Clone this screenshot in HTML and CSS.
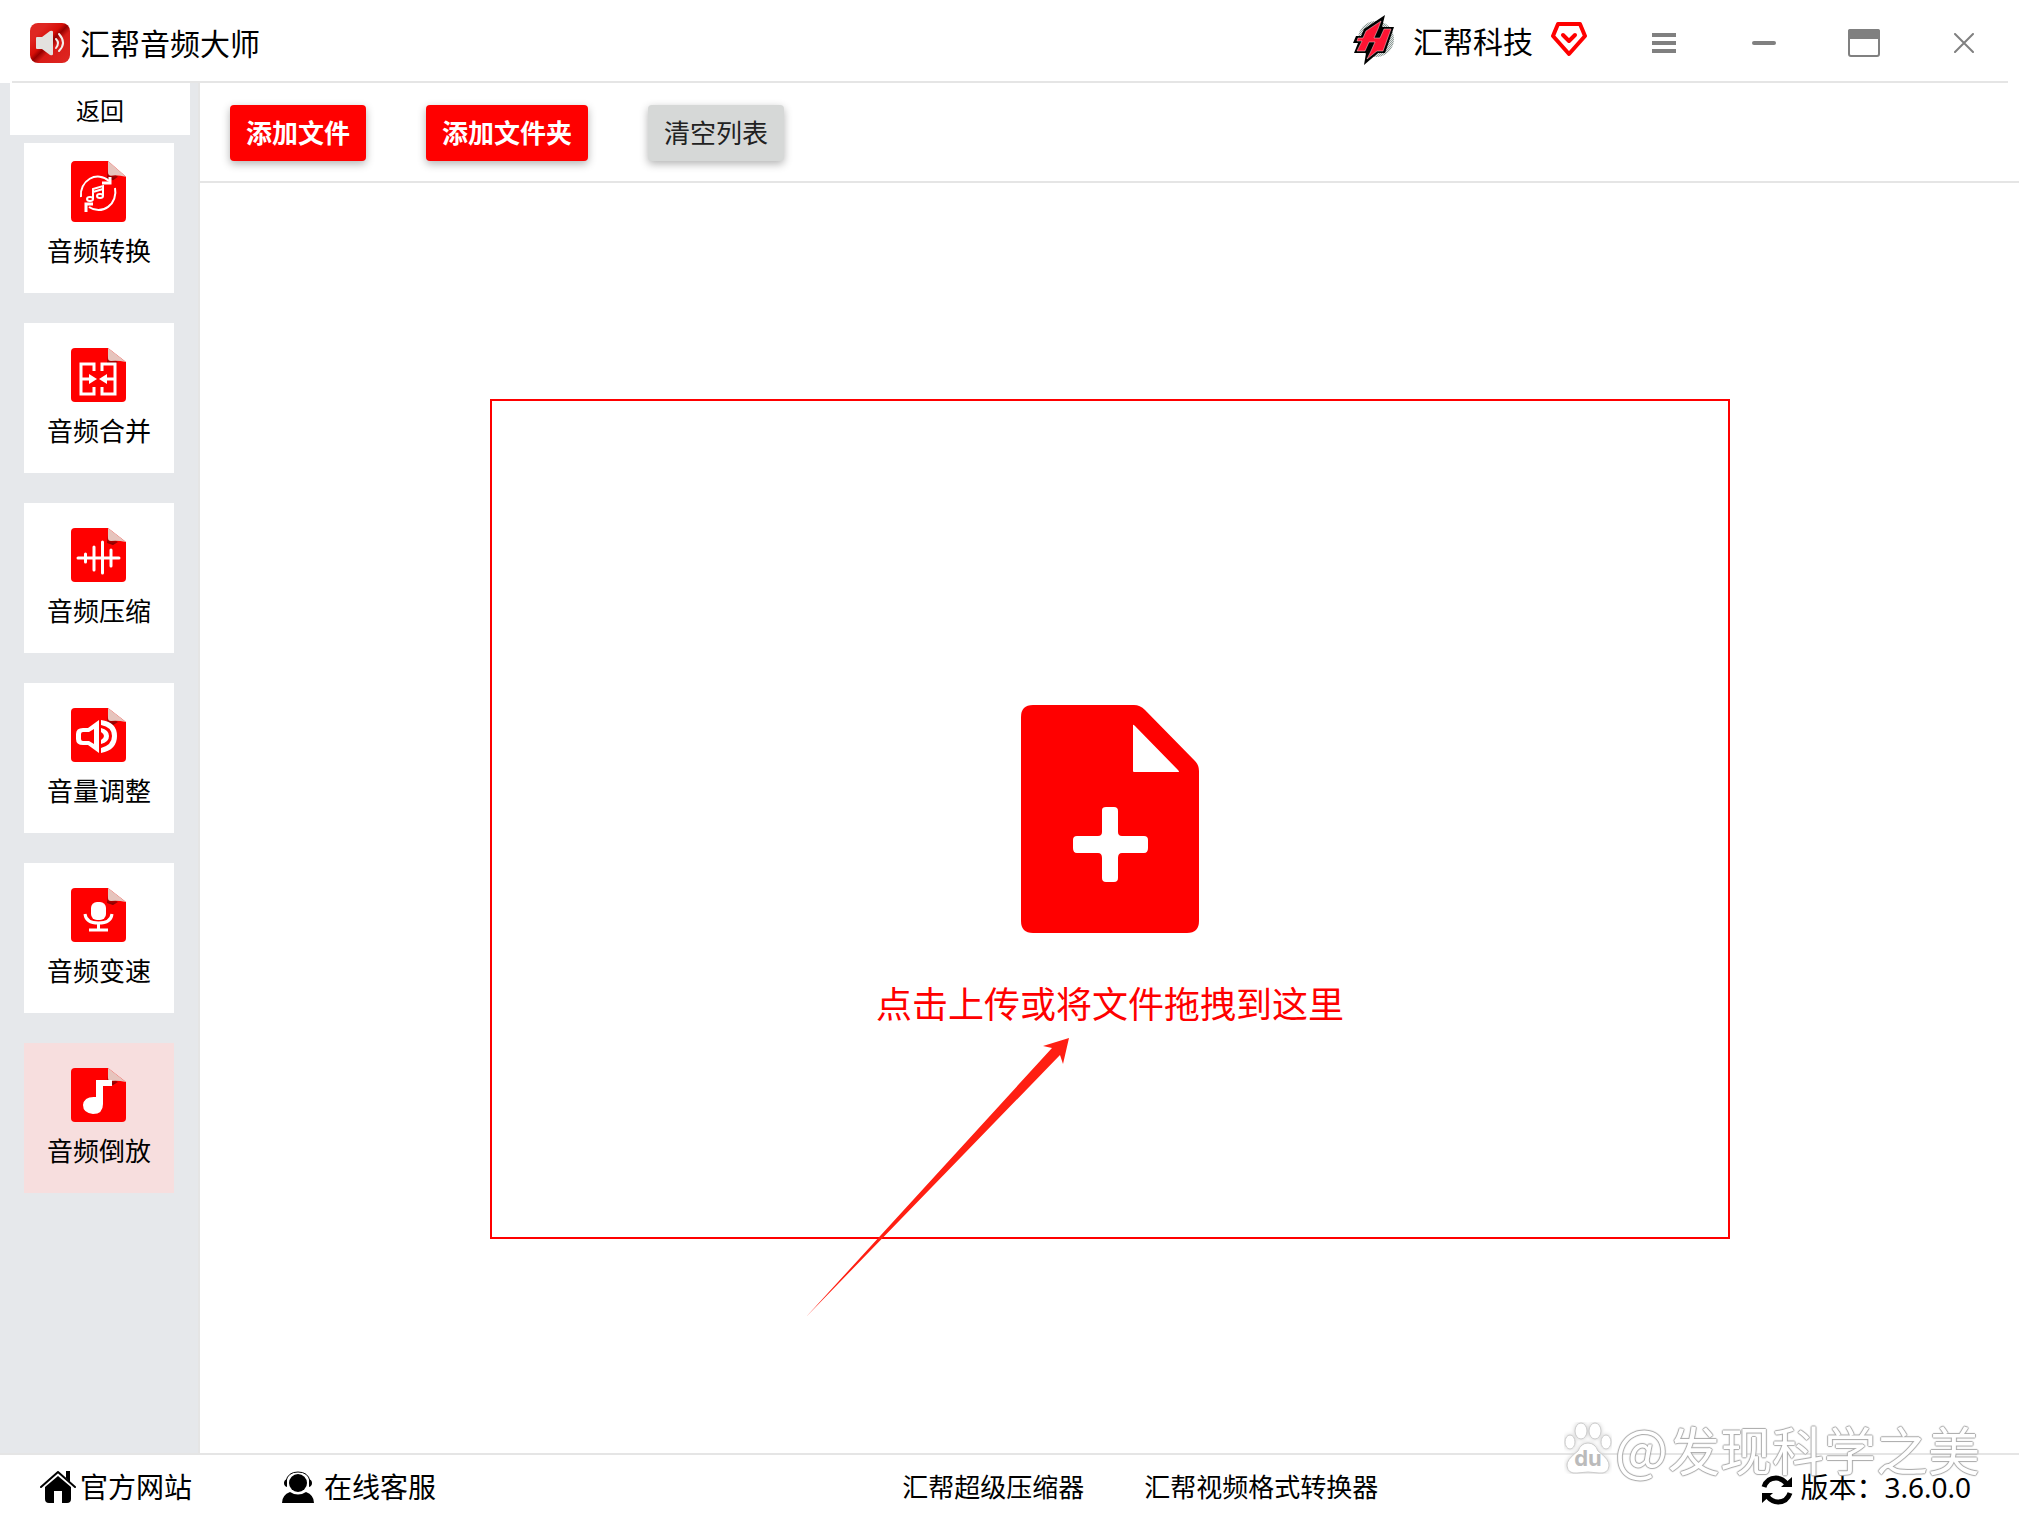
FILE: index.html
```html
<!DOCTYPE html>
<html lang="zh-CN">
<head>
<meta charset="utf-8">
<title>汇帮音频大师</title>
<link rel="stylesheet" href="styles.css">
</head>
<body>
<svg class="defs" width="0" height="0" aria-hidden="true">
  <defs>
    <linearGradient id="logo-fill" x1="0" y1="0" x2="1" y2="1">
      <stop offset="0" stop-color="#df2722"/><stop offset=".22" stop-color="#df2722"/>
      <stop offset=".42" stop-color="#d80f08"/><stop offset=".5" stop-color="#960000"/>
      <stop offset=".6" stop-color="#d81c18"/><stop offset="1" stop-color="#df2722"/>
    </linearGradient>
    <linearGradient id="fold-shade" x1="0" y1="0" x2="0" y2="1">
      <stop offset="0" stop-color="#f00"/><stop offset="1" stop-color="#7a0000"/>
    </linearGradient>
    <pattern id="dots" width="2" height="2" patternUnits="userSpaceOnUse">
      <rect width="2" height="2" fill="#dfe5e3"/><rect width="1" height="1" fill="#8f9a97"/><rect x="1" y="1" width="1" height="1" fill="#8f9a97"/>
    </pattern>
    <symbol id="sheet" viewBox="0 0 55 54" preserveAspectRatio="none">
      <path fill="#f00" d="M4 0h33l18 14v36q0 4-4 4H4q-4 0-4-4V4q0-4 4-4z"/>
      <path fill="url(#fold-shade)" d="M36 7v8l6 2 5-3z"/>
      <path fill="#e6c4bd" d="M37 0l18 14q-9-2-15-1-3 0-3-3z"/>
    </symbol>
  </defs>
</svg>

<header class="titlebar">
  <div class="brand">
    <svg width="40" height="40" viewBox="0 0 40 40" aria-hidden="true">
      <rect width="40" height="40" rx="8" fill="url(#logo-fill)"/>
      <path fill="#e3e1de" d="M6 15q0-1 1-1h5l8-6q3-1 3 1v22q0 2-3 1l-8-6H7q-1 0-1-1z"/>
      <path fill="none" stroke="#f3eeec" stroke-width="2" stroke-linecap="round" d="M26 16q4 4 0 9M29 11q8 9 0 17"/>
    </svg>
    <h1 class="brand-name">汇帮音频大师</h1>
  </div>
  <div class="account">
    <svg width="42" height="50" viewBox="0 0 42 50" aria-hidden="true">
      <circle cx="23" cy="24" r="18" fill="url(#dots)"/>
      <path fill="#000" d="M32 0l-3 12h12l-9 26h-7L11 50l2-12H1l4-10H0l3-7h5l3-7z"/>
      <path fill="#ff1433" stroke="#ffd5da" stroke-width=".5" d="M28 6L13 16l-3 7H5l-1 3h5L4 36h8l4-9h6l-4 9-4 8 10-8h6l8-22h-7l-4 9h-6l4-9z"/>
    </svg>
    <span class="account-name">汇帮科技</span>
    <svg width="36" height="36" viewBox="0 0 36 36" fill="none" stroke="#f00" aria-hidden="true">
      <path stroke-width="4" stroke-linejoin="round" d="M7 2h22l5 12-16 18L2 14z"/>
      <path stroke-width="4" stroke-linecap="round" stroke-linejoin="round" d="M12 13l6 6 6-6"/>
    </svg>
  </div>
  <div class="window-controls">
    <button class="win-btn" type="button" aria-label="菜单"><svg width="24" height="20" viewBox="0 0 24 20" fill="#808080"><path d="M0 0h24v4H0zM0 8h24v4H0zM0 16h24v4H0z"/></svg></button>
    <button class="win-btn" type="button" aria-label="最小化"><svg width="24" height="4" viewBox="0 0 24 4"><rect width="24" height="4" rx="2" fill="#808080"/></svg></button>
    <button class="win-btn" type="button" aria-label="最大化"><svg width="32" height="28" viewBox="0 0 32 28"><rect x="1" y="1" width="30" height="26" rx="2" fill="none" stroke="#808080" stroke-width="2"/><path fill="#808080" d="M0 2q0-2 2-2h28q2 0 2 2v8H0z"/></svg></button>
    <button class="win-btn" type="button" aria-label="关闭"><svg width="20" height="20" viewBox="0 0 20 20"><path fill="none" stroke="#808080" stroke-width="2" stroke-linecap="round" d="M1 1l18 18M19 1L1 19"/></svg></button>
  </div>
</header>

<div class="workspace">
  <nav class="sidebar">
    <button class="back" type="button">返回</button>
    <div class="tools">
      <button class="tool" type="button">
        <svg class="tool-icon" width="55" height="61" viewBox="0 0 55 61">
          <use href="#sheet" width="55" height="61"/>
          <g fill="none" stroke="#fff" stroke-width="2">
            <path d="M10 36A17 18 0 0 1 38 20M44 27A17 18 0 0 1 18 46"/>
            <path stroke-width="3" d="M31 22h8v-6M15 51v-8h7"/>
            <path d="M22 38V28l10-3v10M22 31l10-3"/><ellipse cx="19" cy="38" rx="3" ry="2"/><ellipse cx="29" cy="35" rx="3" ry="2"/>
          </g>
        </svg>
        音频转换
      </button>
      <button class="tool" type="button">
        <svg class="tool-icon" width="55" height="54" viewBox="0 0 55 54">
          <use href="#sheet" width="55" height="54"/>
          <g fill="none" stroke="#fff" stroke-width="3"><path d="M23 23v-7H10v30h13v-7M31 23v-7h13v30H31v-7M10 31h9M44 31H34"/></g>
          <path fill="#fff" d="M18 26l8 5-8 5zM36 26l-8 5 8 5z"/>
        </svg>
        音频合并
      </button>
      <button class="tool" type="button">
        <svg class="tool-icon" width="55" height="54" viewBox="0 0 55 54">
          <use href="#sheet" width="55" height="54"/>
          <path fill="none" stroke="#fff" stroke-width="3" stroke-linecap="round" d="M7 30h41M14.500 26v8M23 19v23M31.500 14v31M40 22v16"/>
        </svg>
        音频压缩
      </button>
      <button class="tool" type="button">
        <svg class="tool-icon" width="55" height="54" viewBox="0 0 55 54">
          <use href="#sheet" width="55" height="54"/>
          <path fill="#fff" fill-rule="evenodd" d="M28 12v33L17 37h-5Q5 37 5 31v-5q0-6 7-6h5zM23 21l-5 3h-6q-2 0-2 2v5q0 2 2 2h6l5 3z"/>
          <path fill="#fff" d="M30 12q16 2 16 16T30 45v-5q11-3 11-12T30 17zM30 20q8 2 8 8t-8 8v-4q3-2 3-4t-3-4z"/>
        </svg>
        音量调整
      </button>
      <button class="tool" type="button">
        <svg class="tool-icon" width="55" height="54" viewBox="0 0 55 54">
          <use href="#sheet" width="55" height="54"/>
          <rect x="20" y="14" width="15" height="18" rx="6" fill="#fff"/>
          <path fill="none" stroke="#fff" stroke-width="3" d="M14 26q1 9 13.500 9T41 26M27.500 35v7M18 42h19"/>
        </svg>
        音频变速
      </button>
      <button class="tool active" type="button" aria-current="page">
        <svg class="tool-icon" width="55" height="54" viewBox="0 0 55 54">
          <use href="#sheet" width="55" height="54"/>
          <path fill="#fff" d="M25 12h16v6h-9v18q0 10-10 10-10-1-10-9 1-9 13-8z"/>
        </svg>
        音频倒放
      </button>
    </div>
  </nav>

  <main class="content">
    <div class="toolbar">
      <button class="action primary" type="button">添加文件</button>
      <button class="action primary" type="button">添加文件夹</button>
      <button class="action" type="button">清空列表</button>
    </div>
    <div class="stage">
      <button class="dropzone" type="button">
        <svg width="178" height="228" viewBox="0 0 178 228" aria-hidden="true">
          <path fill="#f00" fill-rule="evenodd" d="M12 0h101q6 0 11 5l50 51q4 4 4 10v150q0 12-12 12H12q-12 0-12-12V12Q0 0 12 0zM112 20v46q0 1 1 1h44q2 0 0-2l-43-44q-2-2-2-1zM81 105q0-3 4-3h8q4 0 4 4v21q0 4 4 4h22q4 0 4 4v8q0 5-4 5h-22q-4 0-4 5v20q0 4-4 4h-8q-4 0-4-4v-20q0-5-4-5H56q-4 0-4-5v-8q0-4 4-4h21q4 0 4-4z"/>
        </svg>
        <span class="drop-text">点击上传或将文件拖拽到这里</span>
        <svg class="arrow" width="264" height="280" viewBox="0 0 264 280" aria-hidden="true">
          <path fill="#ff1f12" d="M263 0l-26 8 9 2L0 279 254 17l3 9z"/>
        </svg>
      </button>
    </div>
  </main>
</div>

<footer class="statusbar">
  <div class="support">
    <a class="foot-link site" href="#site">
      <svg width="36" height="32" viewBox="0 0 36 32" aria-hidden="true"><path d="M18 5l13 11v12q0 4-4 4h-5V20h-8v12H9q-4 0-4-4V16z"/><path fill="none" stroke="#000" stroke-width="2" stroke-linecap="round" stroke-linejoin="round" d="M1 16L18 1l17 15"/><path d="M26 0h4v11l-4-4z"/></svg>
      官方网站
    </a>
    <a class="foot-link service" href="#service">
      <svg width="32" height="32" viewBox="0 0 32 32" aria-hidden="true"><circle cx="16" cy="12" r="9"/><path fill="none" stroke="#000" d="M4 10q2-9 12-9t12 9"/><path d="M5 8v8q-3-1-3-4t3-4zM27 8v8q3-1 3-4t-3-4zM0 32q0-8 8-11 8 5 16 0 8 3 8 11z"/></svg>
      在线客服
    </a>
  </div>
  <div class="products">
    <a href="#compressor">汇帮超级压缩器</a>
    <a href="#converter">汇帮视频格式转换器</a>
  </div>
  <button class="version" type="button">
    <svg class="refresh" width="32" height="32" viewBox="0 0 32 32" aria-hidden="true"><path fill="none" stroke="#000" stroke-width="5" d="M3 13Q6 4 15 4q6 0 11 6M29 19q-3 9-12 9-6 0-11-6"/><path d="M31 3v10H20zM1 29V19h11z"/></svg>
    <span>版本：3.6.0.0</span>
  </button>
</footer>

<div class="watermark">
  <svg width="48" height="52" viewBox="0 0 48 52" aria-hidden="true">
    <g class="paw" fill="#fff" stroke="#ccc"><ellipse cx="17" cy="9" rx="6" ry="8"/><ellipse cx="31" cy="9" rx="6" ry="8"/><ellipse cx="6" cy="20" rx="5" ry="7"/><ellipse cx="42" cy="20" rx="5" ry="7"/><path d="M24 21q7 0 10 8 12 9 11 15-1 8-10 7-11-2-22 0-9 1-10-7-1-6 11-15 3-8 10-8z"/></g>
    <text class="paw-text" x="24" y="44" text-anchor="middle">du</text>
  </svg>
  <span><span class="at">@</span>发现科学之美</span>
</div>
</body>
</html>
```
FILE: styles.css
```css
* { box-sizing: border-box; }

body {
  margin: 0;
  min-height: 100vh;
  display: flex;
  flex-direction: column;
  position: relative;
  background: #fff;
  color: #000;
  font-family: "Noto Sans", "Noto Sans CJK SC", sans-serif;
  font-size: 26px;
  line-height: 36px;
}

button {
  padding: 0;
  border: 0;
  background: none;
  color: inherit;
  font: inherit;
  cursor: pointer;
}

a { color: inherit; text-decoration: none; }
svg { display: block; flex: none; }
.defs { position: absolute; }

/* Title bar */
.titlebar {
  display: flex;
  align-items: center;
  height: 83px;
  margin: 0 11px 0 12px;
  padding-bottom: 2px;
  border-bottom: 2px solid #e5e5e5;
}

.brand {
  display: flex;
  align-items: center;
  gap: 10px;
  margin-left: 18px;
  padding-top: 6px;
}

.brand-name { margin: 0; padding-top: 2px; font-size: 30px; font-weight: 400; }

.account {
  display: flex;
  align-items: center;
  gap: 18px;
  margin-left: auto;
  margin-right: 27px;
}

.account-name { font-size: 30px; padding-top: 4px; }
.window-controls { display: flex; margin-right: -6px; padding-top: 6px; }
.win-btn { display: grid; place-items: center; width: 100px; height: 60px; }

/* Body */
.workspace { display: flex; flex: 1; }

.sidebar {
  flex: none;
  width: 200px;
  background: #e6e8eb;
  border-right: 2px solid #e5e5e5;
}

.back {
  display: block;
  width: 180px;
  height: 52px;
  margin: 0 0 8px 10px;
  padding-top: 4px;
  background: #fff;
  font-size: 24px;
}

.tools {
  display: flex;
  flex-direction: column;
  gap: 30px;
  padding-left: 24px;
}

.tool {
  display: flex;
  flex-direction: column;
  align-items: center;
  justify-content: flex-end;
  gap: 11px;
  width: 150px;
  height: 150px;
  padding-bottom: 24px;
  background: #fff;
}

.tool.active { background: #f7dede; }
.tool-icon { margin-right: 2px; }

.content { display: flex; flex: 1; flex-direction: column; min-width: 0; }

.toolbar {
  display: flex;
  gap: 60px;
  padding: 22px 30px 20px;
  border-bottom: 2px solid #e5e5e5;
}

.action {
  height: 56px;
  padding: 0 16px;
  border-radius: 4px;
  background: #d6d8d7;
  color: #222;
  box-shadow: 0 3px 8px rgba(0, 0, 0, .3);
}

.action.primary { background: #f00; color: #fff; font-weight: 700; }

.stage { display: flex; flex: 1; padding: 216px 289px 214px 290px; }

.dropzone {
  position: relative;
  display: flex;
  flex: 1;
  flex-direction: column;
  align-items: center;
  justify-content: center;
  gap: 46px;
  padding-top: 98px;
  border: 2px solid #f00;
  color: #f00;
}

.drop-text { font-size: 36px; line-height: 52px; }

.arrow { position: absolute; left: calc(50% - 304px); bottom: -81px; }

/* Status bar */
.statusbar {
  display: grid;
  grid-template-columns: 16fr auto 11fr;
  align-items: center;
  height: 66px;
  padding: 0 48px 0 40px;
  border-top: 2px solid #e5e5e5;
}

.support { display: flex; gap: 90px; font-size: 28px; }
.foot-link { display: flex; align-items: center; }
.site { gap: 4px; }
.service { gap: 10px; }
.products { display: flex; gap: 60px; }
.version { display: flex; align-items: center; justify-self: end; gap: 7px; font-size: 28px; }
.refresh { margin-top: 6px; }

/* Watermark over the bottom edge */
.watermark {
  position: absolute;
  right: 39px;
  bottom: 42px;
  display: flex;
  align-items: center;
  gap: 3px;
  color: #fff;
  font-family: "Noto Sans CJK SC", sans-serif;
  font-size: 52px;
  line-height: 56px;
  text-shadow: 1px 0 1px #aaa, -1px 0 1px #aaa, 0 1px 1px #aaa, 0 -1px 1px #aaa;
  pointer-events: none;
}

.at { font-size: 56px; }
.paw { filter: drop-shadow(0 0 2px #ccc); }

.paw-text {
  fill: #bbb;
  font-family: Inter, sans-serif;
  font-size: 22px;
  font-weight: 700;
  text-shadow: none;
}
```
